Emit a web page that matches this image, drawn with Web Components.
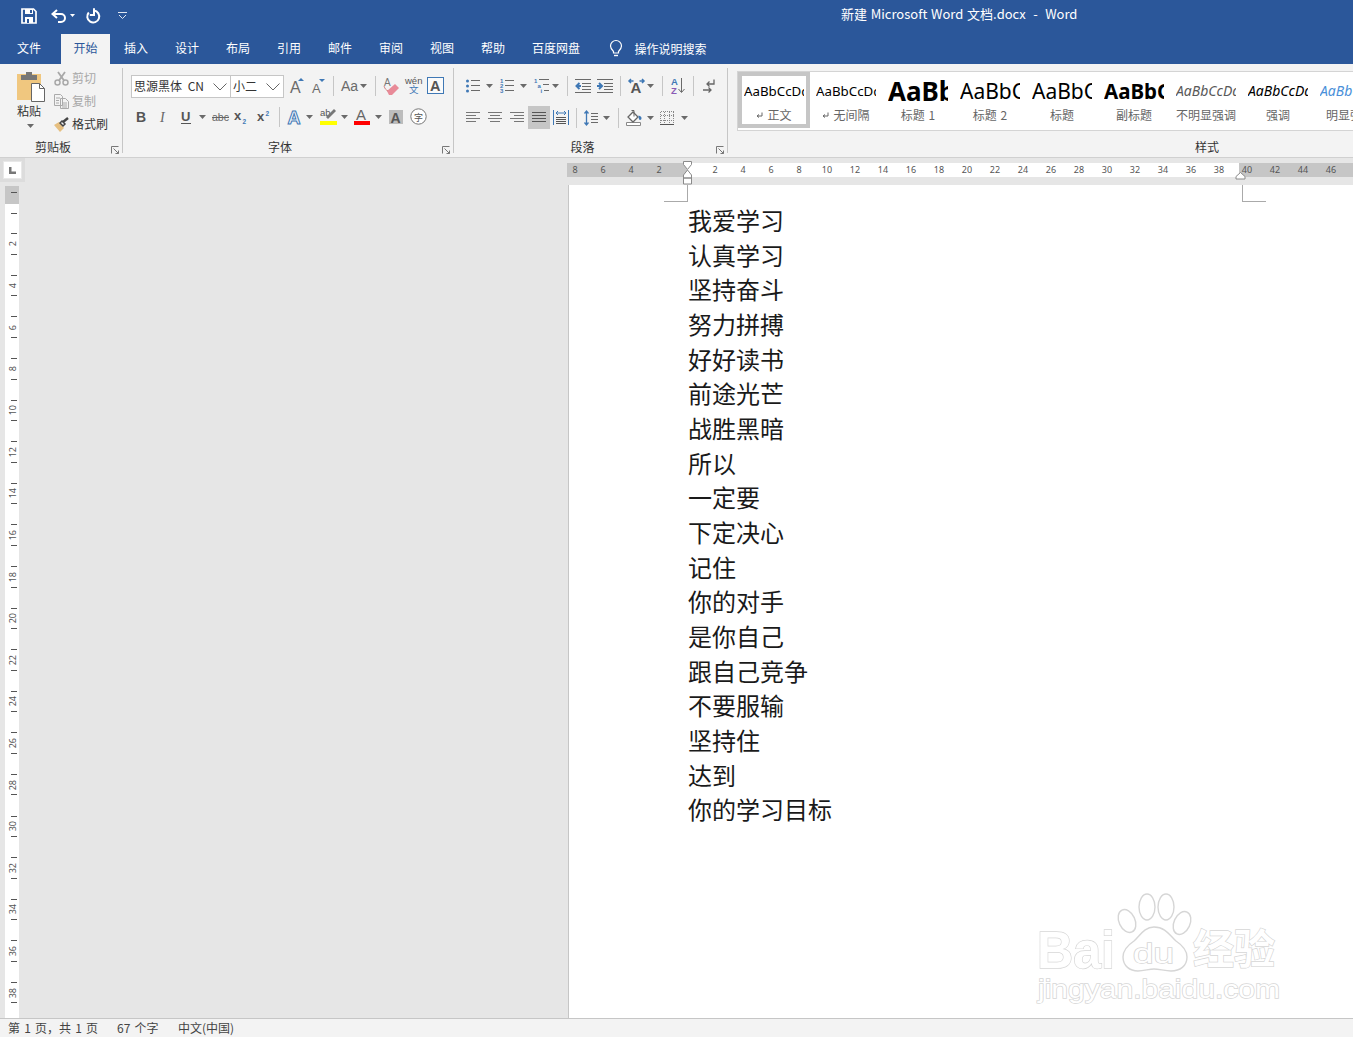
<!DOCTYPE html>
<html lang="zh-CN">
<head>
<meta charset="utf-8">
<title>Word</title>
<style>
html,body{margin:0;padding:0;height:100%;overflow:hidden}
body{font-family:"Noto Sans CJK SC","Noto Sans",sans-serif;font-size:12px;color:#333}
</style>
<script>
const G='#6a6a6a',BL='#3f78b5';
const ln=(d,c=G,w=1)=>`<path d="${d}" fill="none" stroke="${c}" stroke-width="${w}"/>`;
const tx=(x,y,s,t,c=G,ex='')=>`<text x="${x}" y="${y}" font-size="${s}" fill="${c}" font-family="Liberation Sans,sans-serif" ${ex}>${t}</text>`;
const ICONS={
 save:[16,16,`<path d="M1 1h11.500L15 3.500V15H1z" fill="none" stroke="#fff" stroke-width="1.700"/><path d="M4 1h8v5H4z" fill="#fff"/><path d="M9 2h2v3H9z" fill="#2b579a"/><path d="M4 9h8v6H4z" fill="#fff"/><path d="M6 11h2v4H6z" fill="#2b579a"/>`],
 undo:[15,14,ln('M6 1L1.500 5 6 9M2 5h8a3.600 3.600 0 0 1 0 8H7','#fff',2)],
 repeat:[14,15,ln('M2.800 4.500A6 6 0 1 0 8 2.600','#fff',2)+ln('M8 .3V7H3.800','#fff',2)],
 arrowW:[5,3,`<path d="M0 0h5L2.500 3z" fill="#fff"/>`],
 custom:[9,7,ln('M0 .5h9M1 3l3.500 3.500L8 3','#dfe6f1')],
 bulb:[14,17,ln('M4.500 11.500C3 10 1.500 8.500 1.500 6a5.500 5.500 0 0 1 11 0c0 2.500-1.500 4-3 5.500v1.500h-5z','#fff',1.200)+ln('M5 15.500h4','#fff',1.400)],
 arrow:[7,4,`<path d="M0 0h7L3.500 4z" fill="#6a6a6a"/>`],
 paste:[28,31,`<path d="M0 3h24v26H0z" fill="#f0c77f"/><path d="M4 4h16v5H4z" fill="#777"/><path d="M9 1h6v4H9z" fill="#777"/><path d="M14.500 12.500h8l5 5v13h-13z" fill="#fff" stroke="#666"/><path d="M22.500 12.500v5h5" fill="none" stroke="#666"/>`],
 cut:[15,15,`<circle cx="3.500" cy="11.500" r="2.500" fill="none" stroke="#a8a8a8" stroke-width="1.500"/><circle cx="11.500" cy="11.500" r="2.500" fill="none" stroke="#a8a8a8" stroke-width="1.500"/>`+ln('M5 9.500L11 1M10 9.500L4 1','#a8a8a8',1.800)],
 copy:[15,15,ln('M.5.500h6l2 2v9H.500zM6.500 4.500h5l3 3v7h-8zM2 4h4M2 6.500h3M2 9h3M8 9h5M8 11h5M8 13h5','#aaa')],
 painter:[15,15,`<path d="M0 8l5-3 5 6-4 4z" fill="#e6bf80"/>`+ln('M6 6l2-2 3 3-2 2z','#444',1.500)+ln('M9 5l5-4','#444',2.500)],
 launch:[8,8,ln('M.5 7.500V.500h7','#777')+ln('M2.500 2.500l5 5M7.500 4.500v3h-3','#777')],
 grow:[14,15,tx(0,15,16,'A',G)+`<path d="M8 3l3-3 3 3z" fill="${BL}"/>`],
 shrink:[15,14,tx(1,14,13,'A',G)+`<path d="M8 0h6l-3 3z" fill="${BL}"/>`],
 Aa:[22,16,tx(3,13,14,'Aa',G)],
 eraser:[16,18,tx(1,9,10,'A','#777')+`<path d="M4 14l8-7 4 4-7 7H6z" fill="#e88a98"/>`+ln('M1 9c1 3 2 4 4 5','#c66',.8)],
 wen:[17,17,tx(0,7,9.500,'wén','#555')+`<text x="4" y="16" font-size="9.500" fill="${BL}" font-family="Noto Sans CJK SC">文</text>`],
 abox:[17,17,`<rect x=".5" y=".5" width="16" height="16" fill="#fafafa" stroke="${BL}"/>`+tx(3,13.500,14.500,'A','#555','font-weight="700"')],
 B:[12,14,tx(0,12,14,'B','#555','font-weight="700"')],
 I:[10,14,`<text x="2" y="12" font-size="14" fill="#666" font-style="italic" font-family="Liberation Serif">I</text>`],
 U:[12,16,tx(1,11.500,13,'U','#555','font-weight="700"')+ln('M1 14.500h10','#555')],
 abc:[17,12,tx(0,10,10.500,'abc','#666')+ln('M0 6.500h17','#666')],
 sub:[14,14,tx(0,10,13,'x','#555','font-weight="700"')+tx(8.500,13.500,6.500,'2',BL,'font-weight="700"')],
 sup:[14,14,tx(0,11,13,'x','#555','font-weight="700"')+tx(8.500,6,6.500,'2',BL,'font-weight="700"')],
 aeff:[16,16,tx(.5,14.500,18,'A','#f2f7fc',`font-weight="700" stroke="${BL}" stroke-width="1"`)],
 high:[17,17,tx(0,7.500,9.500,'ab','#555')+ln('M7 10l8-8','#777',2.800)+`<path d="M0 13h17v4H0z" fill="#ffff00"/>`],
 fcolor:[16,17,tx(2,12,15,'A','#666')+`<path d="M0 13h16v4H0z" fill="#ff0000"/>`],
 agray:[14,14,`<path d="M0 0h14v14H0z" fill="#bcbcbc"/>`+tx(1.500,12.500,14,'A','#555','font-weight="700"')],
 circ:[17,17,`<circle cx="8.500" cy="8.500" r="7.700" fill="#fff" stroke="#777"/><text x="4" y="12.500" font-size="9" fill="#555" font-family="Noto Sans CJK SC">字</text>`],
 bullets:[14,14,`<circle cx="1.500" cy="2" r="1.500" fill="${BL}"/><circle cx="1.500" cy="7" r="1.500" fill="${BL}"/><circle cx="1.500" cy="12" r="1.500" fill="${BL}"/>`+ln('M5 1.500h9M5 6.500h9M5 11.500h9')],
 num:[14,15,tx(0,5,6,'1',BL,'font-weight="700"')+tx(0,10,6,'2',BL,'font-weight="700"')+tx(0,15,6,'3',BL,'font-weight="700"')+ln('M5 2.500h9M5 7.500h9M5 12.500h9')],
 multi:[15,15,tx(0,5,6,'1',BL,'font-weight="700"')+tx(3.500,10,6,'a',BL,'font-weight="700"')+tx(6.500,15,6,'i',BL,'font-weight="700"')+ln('M5 1.500h10M9 6.500h6M10 12.500h5')],
 dec:[16,14,ln('M0 .5h16M7 4.500h9M7 7.500h9M7 10.500h9M0 13.500h16')+ln('M6 7H1.500M4.500 4L1.500 7l3 3',BL,2)],
 inc:[16,14,ln('M0 .5h16M7 4.500h9M7 7.500h9M7 10.500h9M0 13.500h16')+ln('M0 7h4.500M2 4l3 3-3 3',BL,2)],
 asian:[17,15,tx(2.500,15,15,'A','#555','font-weight="700"')+ln('M5.500 3H1M3 1L1 3l2 2M11.500 3H16M14 1l2 2-2 2',BL,1.500)],
 sort:[14,17,tx(0,8,9.500,'A',BL,'font-weight="700"')+tx(0,17,9.500,'Z','#8a5bb5','font-weight="700"')+ln('M10.500 1v14M7.500 12l3 3.500 3-3.500')],
 pil:[12,14,ln('M11 .5v4.500H4M6.500 2.500L4 5l2.500 2.500M0 11h8M5.500 8.500L8 11l-2.500 2.500','#666',1.300)],
 left:[14,11,ln('M0 .5h14M0 3.500h10M0 6.500h14M0 9.500h10','#777')],
 center:[14,11,ln('M0 .5h14M2 3.500h10M0 6.500h14M2 9.500h10','#777')],
 right:[14,11,ln('M0 .5h14M4 3.500h10M0 6.500h14M4 9.500h10','#777')],
 just:[14,11,ln('M0 .5h14M0 3.500h14M0 6.500h14M0 9.500h14','#555')],
 dist:[16,15,ln('M.5 0v15M15.500 0v15',BL)+ln('M3 3h10M5 1L3 3l2 2M11 1l2 2-2 2',BL)+ln('M3 7.500h10M3 9.500h10M3 11.500h10M3 13.500h10','#555')],
 line:[14,16,ln('M2.500 1v14M.5 3.500L2.500 1l2 2.500M.5 12.500l2 2.500 2-2.500',BL,1.300)+ln('M7 3.500h7M7 6.500h7M7 9.500h7M7 12.500h7')],
 shade:[16,16,`<path d="M.5 12.500h14v3H.5z" fill="#fff" stroke="#888"/><path d="M7 2l5 5-5 5-5-5z" fill="#fff" stroke="#666" stroke-width="1.300"/>`+ln('M5.500 .5h2.500v6','#666')+`<path d="M12.500 5.500c2 .5 3 1.500 3 2.500s-.5 2-1.500 2-1.500-2-1.500-4.500z" fill="${BL}"/>`],
 border:[14,14,`<path d="M.5.5h13M.5 4.500h13M.5 9.500h13M.5 .5v13M4.500 .5v13M9.500.5v13M13.500.5v13" fill="none" stroke="#888" stroke-dasharray="1 1" shape-rendering="crispEdges"/><path d="M0 13.500h14" stroke="#555" shape-rendering="crispEdges"/>`],
 ret:[7,7,ln('M6 .5v3.500H1.500M3 2.500L1 4l2 1.500','#666')],
};
class Base extends HTMLElement{
 connectedCallback(){ if(!this.shadowRoot) this.attachShadow({mode:'open'}).innerHTML=this.render(); }
}
class WdIcon extends Base{
 render(){
  const n=this.getAttribute('name');
  if(n==='sep') return `<style>:host{display:flex;align-items:center;justify-content:center;height:23px;flex:none}i{display:block;width:1px;height:20px;background:#c6c6c6}</style><i></i>`;
  const [w,h,c]=ICONS[n];
  return `<style>:host{display:flex;align-items:center;justify-content:center;height:23px;flex:none}svg{display:block;overflow:visible}</style><svg width="${w}" height="${h}" viewBox="0 0 ${w} ${h}">${c}</svg>`;
 }
}
const row=(start,items)=>{let x=start;return items.map(([cx,w,n])=>{const l=cx-w/2,m=l-x;x=l+w;return `<wd-icon name="${n}" style="margin-left:${m}px;width:${w}px"></wd-icon>`}).join('')};
class TitleBar extends Base{
 render(){return `<style>:host{display:flex;align-items:center;height:34px;background:#2b579a;color:#fff;flex:none}
 .t{margin-left:714px;font:13px/28px "Noto Sans CJK SC","Noto Sans",sans-serif;white-space:pre;padding-bottom:6px;word-spacing:.8px}
 .q{display:flex;width:127px;padding-bottom:3px}</style>
 <div class="q">${row(0,[[29,16,'save'],[58,15,'undo'],[72,5,'arrowW'],[93,14,'repeat'],[122,9,'custom']])}</div>
 <div class="t">新建 Microsoft Word 文档.docx  -  Word</div>`}
}
class RibbonTabs extends Base{
 render(){
  const t=(s,w,ml,a)=>`<div class="tab${a?' on':''}" style="width:${w}px;margin-left:${ml}px">${s}</div>`;
  return `<style>:host{display:flex;height:30px;background:#2b579a;flex:none;color:#fff}
  .tab{height:30px;line-height:28px;text-align:center;font-size:12px;flex:none}
  .on{background:#f3f3f3;color:#2b579a}
  .s{display:flex;align-items:center;margin-left:16px;padding-bottom:1px}.s span{margin-left:12px;font-size:12px;line-height:28px}</style>
  ${t('文件',49,4.500)}${t('开始',49,7.500,1)}${['插入','设计','布局','引用','邮件','审阅','视图','帮助'].map((s,i)=>t(s,49,i?2:1.500)).join('')}${t('百度网盘',73,2)}
  <div class="s"><wd-icon name="bulb"></wd-icon><span>操作说明搜索</span></div>`}
}
class RibbonGroup extends Base{
 render(){
  const w=this.getAttribute('w'),nl=this.hasAttribute('nolaunch');
  return `<style>:host{display:flex;flex-direction:column;flex:none;width:${w}px;height:85px;box-sizing:border-box;position:relative;${nl?'':'border-right:1px solid #c6c6c6'}}
  .b{flex:1;min-height:0}.f{height:12px;line-height:12px;font-size:12px;text-align:center;padding-right:16px;color:#333}
  wd-icon{position:absolute;right:3px;bottom:-8px}</style>
  <div class="b"><slot></slot></div><div class="f">${this.getAttribute('label')}</div>${nl?'':'<wd-icon name="launch"></wd-icon>'}`}
}
class ClipTools extends Base{
 render(){return `<style>:host{display:flex}
 .p{width:28px;margin:3px 9px 0 17px;display:flex;flex-direction:column;align-items:center}
 .p span{line-height:16px;font-size:12px;margin-top:1px;color:#333;white-space:nowrap;position:relative;left:-2px}
 .a{height:4px;margin-top:5px;position:relative;left:-1px;display:flex;align-items:center}
 .c{margin-top:3px;display:flex;flex-direction:column;gap:9px}
 .i{display:flex;align-items:center;gap:3px;height:14px;line-height:14px;font-size:12px;white-space:nowrap}
 .i wd-icon{height:14px}.g{color:#a8a8a8}</style>
 <div class="p"><wd-icon name="paste" style="height:31px"></wd-icon><span>粘贴</span><div class="a"><wd-icon name="arrow" style="height:4px"></wd-icon></div></div>
 <div class="c"><div class="i g"><wd-icon name="cut"></wd-icon>剪切</div><div class="i g"><wd-icon name="copy"></wd-icon>复制</div><div class="i"><wd-icon name="painter"></wd-icon>格式刷</div></div>`}
}
class WdCombo extends Base{
 render(){return `<style>:host{display:flex;align-items:center;justify-content:space-between;box-sizing:border-box;width:${this.getAttribute('w')}px;height:23px;background:#fff;border:1px solid #c6c6c6;padding:0 3px 0 2px;font-size:12px;word-spacing:3px;color:#333;flex:none;white-space:nowrap}svg{display:block}span{position:relative;top:-1px}</style>
 <span>${this.getAttribute('text')}</span><svg width="14" height="8" viewBox="0 0 14 8"><path d="M.5.5L7 7 13.500.5" fill="none" stroke="#666"/></svg>`}
}
class FontTools extends Base{
 render(){return `<style>:host{display:flex;flex-direction:column;gap:8px;padding:7px 0 0 8px}.r{display:flex;height:23px}.r wd-icon{position:relative;top:-1px}</style>
 <div class="r"><wd-combo w="100" text="思源黑体 CN"></wd-combo><wd-combo w="54" text="小二" style="margin-left:-1px"></wd-combo>
 ${row(284,[[296.5,20,'grow'],[318.5,20,'shrink'],[333.5,1,'sep'],[349,22,'Aa'],[363,7,'arrow'],[375.5,1,'sep'],[391,18,'eraser'],[413,18,'wen'],[435,18,'abox']])}</div>
 <div class="r">${row(131,[[141.5,20,'B'],[163,20,'I'],[185.5,20,'U'],[202,7,'arrow'],[220,20,'abc'],[241,20,'sub'],[264,20,'sup'],[279.5,1,'sep'],[295,20,'aeff'],[309,7,'arrow'],[328,20,'high'],[344,7,'arrow'],[362,20,'fcolor'],[378,7,'arrow'],[396,18,'agray'],[418,18,'circ']])}</div>`}
}
class ParaTools extends Base{
 render(){return `<style>:host{display:flex;flex-direction:column;gap:8px;padding:7px 0 0 0}.r{display:flex;height:23px}.a wd-icon{position:relative;top:-1px}
 .on{background:#c6c6c6;display:flex;width:22px;height:23px;align-items:center;justify-content:center;flex:none}</style>
 <div class="r a">${row(454,[[472.5,16,'bullets'],[489,7,'arrow'],[507,16,'num'],[523,7,'arrow'],[541,16,'multi'],[555,7,'arrow'],[567.5,1,'sep'],[583,18,'dec'],[605,18,'inc'],[620.5,1,'sep'],[636,18,'asian'],[650,7,'arrow'],[662.5,1,'sep'],[678,16,'sort'],[693.5,1,'sep'],[709,14,'pil']])}</div>
 <div class="r">${row(454,[[473,16,'left'],[495,16,'center'],[517,16,'right']])}<div class="on" style="margin-left:3px"><wd-icon name="just"></wd-icon></div>${row(550,[[561,18,'dist'],[576.5,1,'sep'],[591,16,'line'],[606,7,'arrow'],[618.5,1,'sep'],[634,18,'shade'],[650,7,'arrow'],[667,16,'border'],[684,7,'arrow']])}</div>`}
}
class StyleGallery extends Base{
 render(){return `<style>:host{display:flex;margin:3px 0 0 9px;height:58px;background:#fff;border-top:1px solid #d4d4d4;border-bottom:1px solid #d4d4d4;border-left:1px solid #d4d4d4;overflow:hidden}</style><slot></slot>`}
}
class StyleCard extends Base{
 render(){
  const on=this.hasAttribute('selected'),ret=this.hasAttribute('ret');
  return `<style>:host{display:block;box-sizing:border-box;flex:none;width:72px;height:56px;${on?'border:4px solid #c6c6c6;':'border:4px solid transparent;'}}
  .p{height:30px;line-height:30px;margin:0 0 0 2px;width:60px;overflow:hidden;white-space:nowrap;color:var(--c,#000);font-family:"Noto Sans","Noto Sans CJK SC",sans-serif;font-size:var(--s,13.300px);font-weight:var(--w,400);font-style:var(--i,normal)}
  .l{height:16px;line-height:16px;margin-top:1px;text-align:center;font-size:12px;word-spacing:1px;color:#666;white-space:nowrap;display:flex;justify-content:center;align-items:center;gap:4px}
  </style><div class="p">${this.getAttribute('text')}</div><div class="l">${ret?'<wd-icon name="ret" style="height:16px"></wd-icon>':''}<span>${this.getAttribute('label')}</span></div>`}
}
class HRuler extends Base{
 render(){
  const nums=[8,6,4,2,'',2,4,6,8];for(let i=10;i<=46;i+=2)nums.push(i);
  return `<style>:host{display:flex;flex:none;height:14px;margin-top:5px;overflow:hidden;background:linear-gradient(90deg,#c6c6c6 120px,#fff 120px,#fff 672px,#c6c6c6 672px);font:9px/14px "Noto Sans","Liberation Sans",sans-serif;color:#555}
  span{flex:none;width:28px;text-align:center}span:first-of-type{margin-left:-6px}</style>${nums.map(n=>`<span>${n}</span>`).join('')}`}
}
class VRuler extends Base{
 render(){
  let c='<div class="c z"><i></i><i></i></div>';
  for(let i=2;i<=38;i+=2)c+=`<div class="c"><i></i><span>${i}</span><i></i></div>`;
  return `<style>:host{display:block;box-sizing:border-box;flex:1;min-height:0;margin:4px 3px 0 5px;overflow:hidden;background:linear-gradient(#c6c6c6 18px,#fff 18px);color:#555;font:9px/10px "Noto Sans","Liberation Sans",sans-serif}
  .c{height:41.600px;box-sizing:border-box;padding:10px 0;display:flex;flex-direction:column;justify-content:space-between;align-items:center;position:relative}
  .z{height:37.200px;padding:6px 0 9.500px}
  i{display:block;width:6px;height:1px;background:#555;margin-left:3px;flex:none}
  span{writing-mode:vertical-rl;transform:rotate(180deg);position:relative;left:1px}</style>${c}`}
}
class LeftRail extends Base{
 render(){return `<style>:host{display:flex;flex-direction:column;width:22px;flex:none}
 .k{box-sizing:border-box;width:25px;height:24px;flex:none;background:#dcdcdc;padding:3px 3px 5px 3px}
 .w{box-sizing:border-box;width:19px;height:18px;background:#fff;border:1px solid #e8e8e8;display:flex;align-items:center;justify-content:center}
 svg{display:block}</style>
 <div class="k"><div class="w"><svg width="7" height="7"><path d="M0 0h2.500v4.500H7V7H0z" fill="#777"/></svg></div></div><v-ruler></v-ruler>`}
}
class DocPage extends Base{
 render(){return `<style>:host{display:block;position:relative;flex:1;min-height:0;margin:8px 0 0 1px;box-sizing:border-box;background:#fff;border-left:1px solid #c6c6c6;padding:18px 0 0 119px;overflow:hidden;font-family:"Noto Sans CJK SC",sans-serif}
 .m{position:absolute;top:0;width:23px;height:16px;border-bottom:1px solid #aaa}
 .l{left:95px;border-right:1px solid #aaa}.r{left:673px;border-left:1px solid #aaa}</style>
 <div class="m l"></div><div class="m r"></div><slot></slot><baidu-mark></baidu-mark>`}
}
class DocLine extends Base{
 render(){return `<style>:host{display:block;font-size:24px;line-height:34.650px;color:#1a1a1a;font-weight:400}</style><slot></slot>`}
}
class BaiduMark extends Base{
 render(){
  const s='fill="#fff" stroke="#d6d6d6" stroke-width="1.400"';
  return `<style>:host{position:absolute;left:460px;top:700px;display:block;width:260px;height:125px}svg{display:block;overflow:visible}text{paint-order:stroke}</style>
  <svg width="260" height="125" viewBox="0 0 260 125">
  <g ${s}>
  <ellipse cx="98" cy="36" rx="8" ry="12" transform="rotate(-25 98 36)"/>
  <ellipse cx="118" cy="22" rx="8" ry="13"/>
  <ellipse cx="137" cy="22" rx="8" ry="13"/>
  <ellipse cx="153" cy="38" rx="8" ry="12" transform="rotate(25 153 38)"/>
  <path d="M125 42c-10 0-14 9-20 14-6 4-11 9-11 16 0 9 7 14 15 14 6 0 11-2 16-2s11 2 17 2c9 0 16-5 16-14 0-7-5-12-11-16-6-5-10-14-22-14z"/>
  <text x="8" y="83" font-size="52" font-weight="700" font-family="Liberation Sans,sans-serif" textLength="78" lengthAdjust="spacingAndGlyphs">Bai</text>
  <text x="104" y="78" font-size="28" font-family="Liberation Sans,sans-serif" textLength="41" lengthAdjust="spacingAndGlyphs">du</text>
  <text x="164" y="79" font-size="41" font-family="Noto Sans CJK SC,sans-serif" font-weight="700">经验</text>
  <text x="9" y="113" font-size="26" font-family="Liberation Sans,sans-serif" textLength="242" lengthAdjust="spacingAndGlyphs">jingyan.baidu.com</text>
  </g></svg>`}
}
class StatusBar extends Base{
 render(){return `<style>:host{display:flex;flex:none;box-sizing:border-box;height:19px;border-top:1px solid #c6c6c6;background:#f3f3f3;padding-left:8px;font-size:12px;line-height:17px;color:#444;white-space:nowrap;word-spacing:1.500px}
 span{flex:none}</style><span style="width:109px">第 1 页，共 1 页</span><span style="width:61px">67 个字</span><span>中文(中国)</span>`}
}
class WordApp extends Base{
 render(){return `<style>:host{display:flex;flex-direction:column;height:1037px;width:1353px;overflow:hidden;background:#e6e6e6}
 .rb{display:flex;flex:none;box-sizing:border-box;height:94px;padding:4px 0 5px;background:#f3f3f3;border-bottom:1px solid #d0d0d0;overflow:hidden}
 .ws{display:flex;flex:1;min-height:0;background:#e6e6e6}
 .gap{flex:1}
 .rc{display:flex;flex-direction:column;width:786px;flex:none}</style>
 <title-bar></title-bar><ribbon-tabs></ribbon-tabs>
 <div class="rb"><slot name="ribbon"></slot></div>
 <div class="ws"><left-rail></left-rail><div class="gap"></div><div class="rc"><h-ruler></h-ruler><slot name="page"></slot></div></div>
 <status-bar></status-bar>`}
}
class RulerMarks extends Base{
 render(){return `<style>:host{position:absolute;left:0;top:0;width:1353px;height:200px;pointer-events:none;display:block}svg{position:absolute;overflow:visible;display:block}</style>
 <svg style="left:682px;top:160.500px" width="12" height="24" viewBox="0 0 12 24"><path d="M1.500.5h8v3L5.500 8.500 1.500 3.500zM5.500 9l4 5v3h-8v-3zM1.500 17h8v6h-8z" fill="#fff" stroke="#8a8a8a"/></svg>
 <svg style="left:1235px;top:171.500px" width="12" height="8" viewBox="0 0 12 8"><path d="M5.500.5l4.500 4v2.500H1V4.500z" fill="#fff" stroke="#8a8a8a"/></svg>`}
}
[['wd-icon',WdIcon],['title-bar',TitleBar],['ribbon-tabs',RibbonTabs],['ribbon-group',RibbonGroup],['clip-tools',ClipTools],['wd-combo',WdCombo],['font-tools',FontTools],['para-tools',ParaTools],['style-gallery',StyleGallery],['style-card',StyleCard],['h-ruler',HRuler],['v-ruler',VRuler],['left-rail',LeftRail],['doc-page',DocPage],['doc-line',DocLine],['baidu-mark',BaiduMark],['status-bar',StatusBar],['ruler-marks',RulerMarks],['word-app',WordApp]].forEach(([n,c])=>customElements.define(n,c));
</script>
</head>
<body>
<word-app>
 <ribbon-group slot="ribbon" w="123" label="剪贴板"><clip-tools></clip-tools></ribbon-group>
 <ribbon-group slot="ribbon" w="331" label="字体"><font-tools></font-tools></ribbon-group>
 <ribbon-group slot="ribbon" w="274" label="段落"><para-tools></para-tools></ribbon-group>
 <ribbon-group slot="ribbon" w="974" label="样式" nolaunch>
  <style-gallery>
   <style-card text="AaBbCcDd" label="正文" ret selected></style-card>
   <style-card text="AaBbCcDd" label="无间隔" ret></style-card>
   <style-card text="AaBbC" label="标题 1" style="--s:26px;--w:700"></style-card>
   <style-card text="AaBbC" label="标题 2" style="--s:21px"></style-card>
   <style-card text="AaBbC" label="标题" style="--s:21px"></style-card>
   <style-card text="AaBbC" label="副标题" style="--s:20.500px;--w:700"></style-card>
   <style-card text="AaBbCcDd" label="不明显强调" style="--s:14px;--i:italic;--c:#595959"></style-card>
   <style-card text="AaBbCcDd" label="强调" style="--s:14px;--i:italic"></style-card>
   <style-card text="AaBbCcDd" label="明显强调" style="--s:14px;--i:italic;--c:#4a90d9"></style-card>
  </style-gallery>
 </ribbon-group>
 <doc-page slot="page">
  <doc-line>我爱学习</doc-line><doc-line>认真学习</doc-line><doc-line>坚持奋斗</doc-line><doc-line>努力拼搏</doc-line><doc-line>好好读书</doc-line><doc-line>前途光芒</doc-line><doc-line>战胜黑暗</doc-line><doc-line>所以</doc-line><doc-line>一定要</doc-line><doc-line>下定决心</doc-line><doc-line>记住</doc-line><doc-line>你的对手</doc-line><doc-line>是你自己</doc-line><doc-line>跟自己竞争</doc-line><doc-line>不要服输</doc-line><doc-line>坚持住</doc-line><doc-line>达到</doc-line><doc-line>你的学习目标</doc-line>
 </doc-page>
</word-app>
<ruler-marks></ruler-marks>
</body>
</html>
